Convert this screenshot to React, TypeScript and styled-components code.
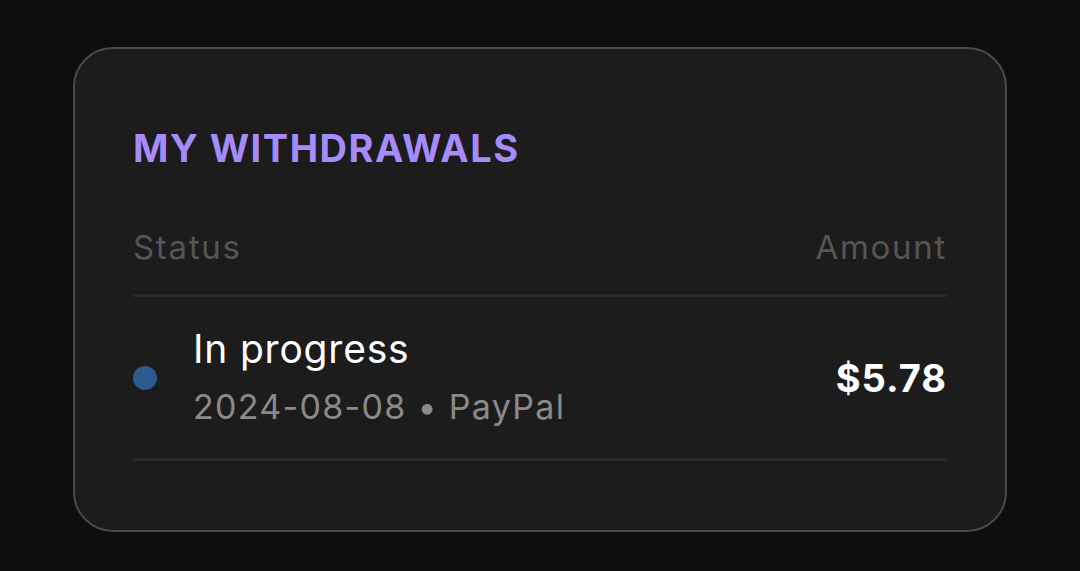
import React from "react";
import styled, { createGlobalStyle } from "styled-components";

const Global = createGlobalStyle`
  html, body { margin: 0; padding: 0; background: #0e0e0e; }
  body { font-family: Inter, "Noto Sans", sans-serif; }
`;

const Page = styled.div`
  width: 1080px;
  height: 571px;
  box-sizing: border-box;
  padding: 47px 73px 0 73px;
  background: #0e0e0e;
`;

const Card = styled.section`
  box-sizing: border-box;
  width: 934px;
  height: 485px;
  border: 2px solid #4a4a4a;
  border-radius: 40px;
  background: #1c1c1c;
  padding: 76px 58px 0 58px;
  display: flex;
  flex-direction: column;
`;

const Title = styled.h2`
  margin: 0;
  font-size: 38px;
  line-height: 46px;
  font-weight: 700;
  color: #a78bfa;
  letter-spacing: 1.5px;
`;

const HeaderRow = styled.div`
  display: flex;
  justify-content: space-between;
  align-items: center;
  margin-top: 53px;
  padding-bottom: 24px;
  border-bottom: 3px solid #2a2a2a;
  color: #555555;
  font-size: 33px;
  line-height: 46px;
  letter-spacing: 1.7px;
`;

const Row = styled.div`
  display: flex;
  align-items: center;
  padding: 26px 0 25px 0;
  border-bottom: 3px solid #2a2a2a;
`;

const Dot = styled.span<{ $color: string }>`
  width: 24px;
  height: 24px;
  border-radius: 50%;
  background: ${(p) => p.$color};
  flex-shrink: 0;
  margin-right: 36px;
`;

const Info = styled.div`
  display: flex;
  flex-direction: column;
  flex: 1;
`;

const StatusText = styled.div`
  color: #ffffff;
  font-size: 39px;
  line-height: 52px;
  letter-spacing: 0.8px;
`;

const Meta = styled.div`
  color: #8a8a8a;
  font-size: 34px;
  line-height: 52px;
  letter-spacing: 1.3px;
  margin-top: 6px;
`;

const Amount = styled.div`
  color: #ffffff;
  font-size: 38px;
  font-weight: 700;
  letter-spacing: 1px;
`;

export default function App() {
  return (
    <>
      <Global />
      <Page>
        <Card>
          <Title>MY WITHDRAWALS</Title>
          <HeaderRow>
            <span>Status</span>
            <span>Amount</span>
          </HeaderRow>
          <Row>
            <Dot $color="#2d5a8e" />
            <Info>
              <StatusText>In progress</StatusText>
              <Meta>2024-08-08 • PayPal</Meta>
            </Info>
            <Amount>$5.78</Amount>
          </Row>
        </Card>
      </Page>
    </>
  );
}
